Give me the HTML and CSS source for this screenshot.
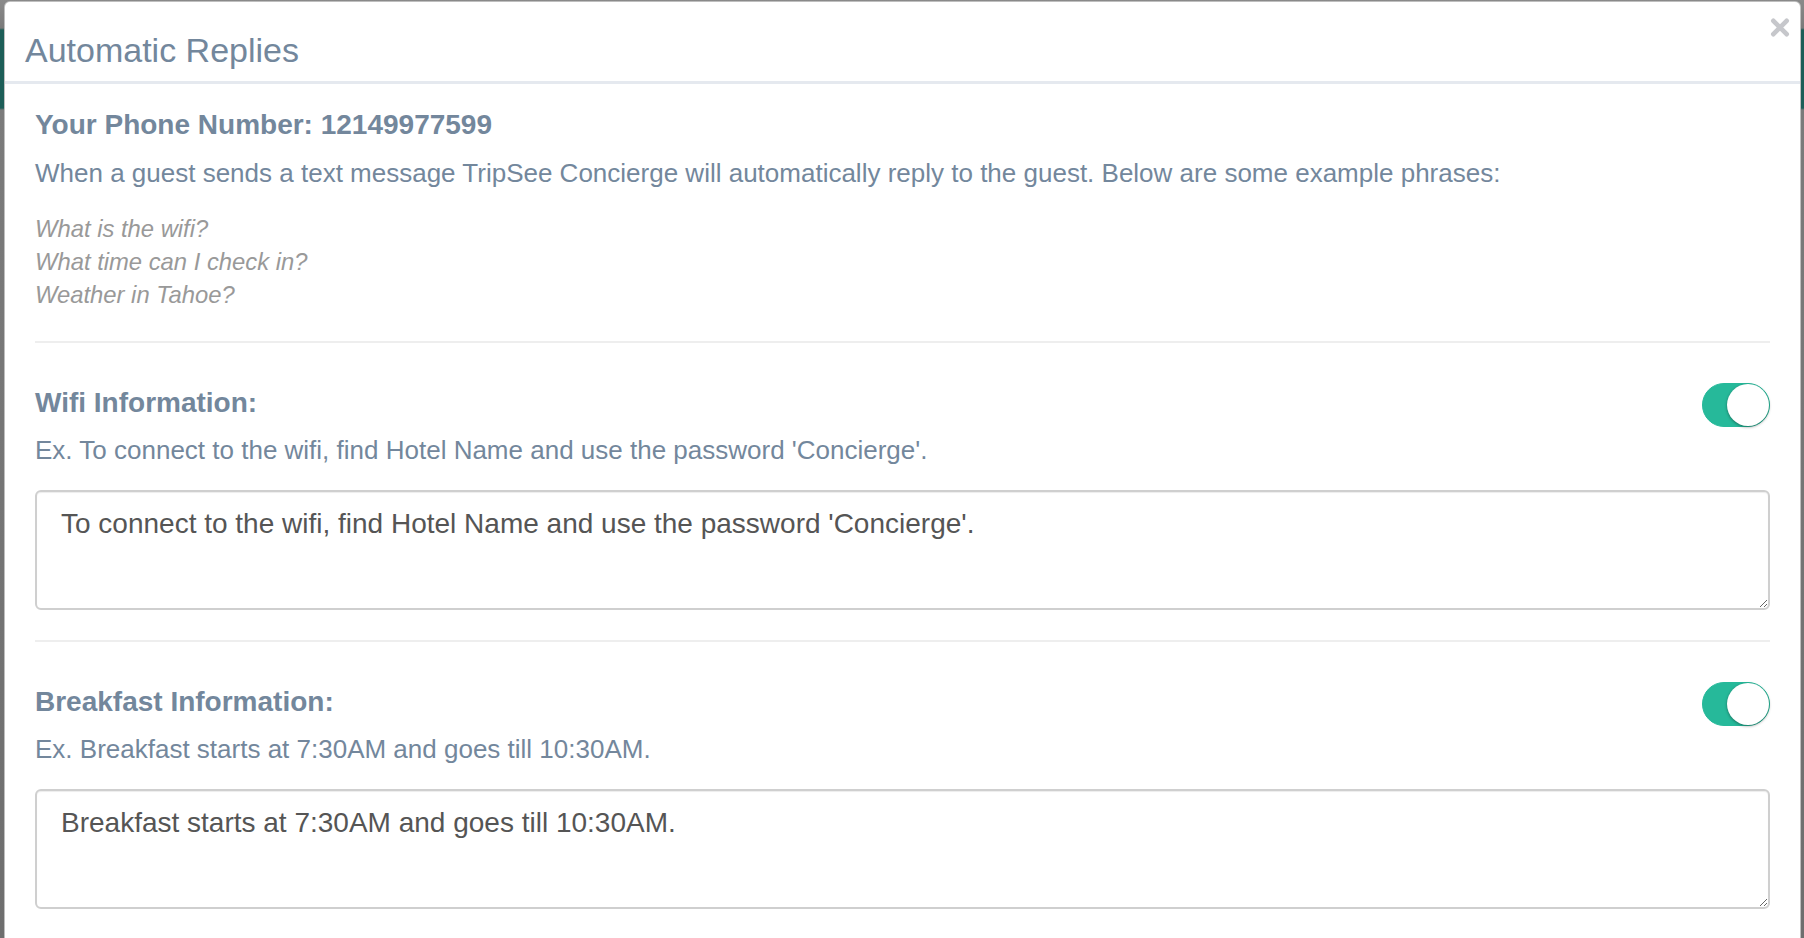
FILE: index.html
```html
<!DOCTYPE html>
<html lang="en">
<head>
<meta charset="utf-8">
<title>Automatic Replies</title>
<link rel="stylesheet" href="styles.css">
</head>
<body>
<div class="modal">
  <div class="modal-header">
    <h2 class="modal-title">Automatic Replies</h2>
    <button class="close" type="button" aria-label="Close">
      <svg viewBox="0 0 20 20" width="20" height="19"><path d="M3 3 L17 17 M17 3 L3 17" stroke="#c6c7cb" stroke-width="5" stroke-linecap="round"/></svg>
    </button>
  </div>
  <div class="modal-body">
    <h4 class="phone">Your Phone Number: 12149977599</h4>
    <p class="desc">When a guest sends a text message TripSee Concierge will automatically reply to the guest. Below are some example phrases:</p>
    <div class="examples">
      <div>What is the wifi?</div>
      <div>What time can I check in?</div>
      <div>Weather in Tahoe?</div>
    </div>

    <hr class="sep">
    <section class="reply">
      <div class="reply-head">
        <h4 class="reply-title">Wifi Information:</h4>
        <span class="switch on"><span class="knob"></span></span>
      </div>
      <p class="example-line">Ex. To connect to the wifi, find Hotel Name and use the password 'Concierge'.</p>
      <textarea class="reply-input">To connect to the wifi, find Hotel Name and use the password 'Concierge'.</textarea>
    </section>

    <hr class="sep">
    <section class="reply">
      <div class="reply-head">
        <h4 class="reply-title">Breakfast Information:</h4>
        <span class="switch on"><span class="knob"></span></span>
      </div>
      <p class="example-line">Ex. Breakfast starts at 7:30AM and goes till 10:30AM.</p>
      <textarea class="reply-input">Breakfast starts at 7:30AM and goes till 10:30AM.</textarea>
    </section>
    <hr class="sep">
  </div>
</div>
</body>
</html>
```
FILE: styles.css
```css
* { box-sizing: border-box; }
html, body { height: 100%; }
body {
  margin: 0;
  overflow: hidden;
  font-family: "Liberation Sans", Arial, sans-serif;
  color: #73879c;
  background: linear-gradient(to bottom, #8a8a8a 0, #7a7a7a 28px, #1d5e58 30px, #1d5e58 108px, #7b7b7b 110px, #6e6e6e 100%);
}
.modal {
  margin: 1px 3px 0 4px;
  background: #fff;
  border: 1px solid rgba(0,0,0,0.25);
  border-bottom: none;
  border-radius: 6px 6px 0 0;
  min-height: 1100px;
}
.modal-header {
  display: flex;
  justify-content: space-between;
  align-items: flex-start;
  padding: 28px 10px 11px 20px;
  border-bottom: 3px solid #e5e9ef;
}
.modal-title {
  margin: 0;
  font-size: 34px;
  line-height: 40px;
  font-weight: normal;
  color: #73879c;
}
.close {
  margin-top: -12px;
  padding: 0;
  border: 0;
  background: none;
  line-height: 0;
  cursor: pointer;
}
.modal-body {
  padding: 0 30px;
}
.phone {
  margin: 24px 0 0;
  font-size: 28px;
  line-height: 34px;
  font-weight: bold;
}
.desc {
  margin: 13px 0 0;
  font-size: 26px;
  line-height: 36px;
}
.examples {
  margin-top: 21px;
  font-size: 23.8px;
  line-height: 33px;
  font-style: italic;
  color: #999;
}
.sep {
  margin: 30px 0 0;
  border: 0;
  border-top: 2px solid #eeeeee;
  height: 0;
}
.reply { margin-top: 40px; }
.reply + .sep { margin-top: 30px; }
.reply-head {
  display: flex;
  justify-content: space-between;
  align-items: flex-start;
}
.reply-title {
  margin: 2.5px 0 0;
  font-size: 28px;
  line-height: 34px;
  font-weight: bold;
}
.switch {
  position: relative;
  display: block;
  width: 68px;
  height: 44px;
  border-radius: 22px;
  background: #26b99a;
  border: 1px solid #26b99a;
}
.knob {
  position: absolute;
  top: 0;
  right: 0;
  width: 42px;
  height: 42px;
  border-radius: 50%;
  background: #fff;
  box-shadow: 0 1px 3px rgba(0,0,0,0.4);
}
.example-line {
  margin: 5px 0 0;
  font-size: 26px;
  line-height: 36px;
}
.reply-input {
  display: block;
  width: 100%;
  height: 120px;
  margin-top: 22px;
  padding: 12px 24px;
  font-family: "Liberation Sans", Arial, sans-serif;
  font-size: 28px;
  line-height: 39.6px;
  color: #555;
  background: #fff;
  border: 2px solid #cfcfcf;
  border-radius: 6px;
  box-shadow: inset 0 1px 1px rgba(0,0,0,0.075);
  outline: none;
}
```
